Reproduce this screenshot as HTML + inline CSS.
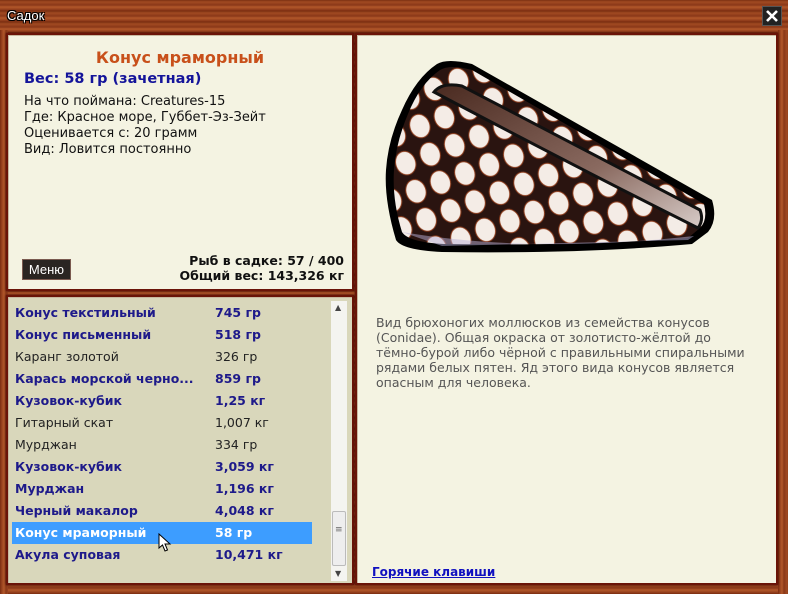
<!DOCTYPE html>
<html><head><meta charset="utf-8"><style>
*{margin:0;padding:0;box-sizing:border-box}
body{width:788px;height:594px;overflow:hidden;position:relative;font-family:"DejaVu Sans","Liberation Sans",sans-serif;
background:repeating-linear-gradient(0deg,#7a2c10 0px,#9a4420 2px,#b2582a 4px,#8a3818 6px,#a14a22 9px,#7c3012 11px);}
.vw{background:repeating-linear-gradient(90deg,#7a2c10 0px,#9a4420 2px,#b2582a 4px,#8a3818 6px,#a14a22 9px,#7c3012 11px);}
.p{position:absolute;background:#f4f3e2;border:2px solid #6a1408;box-shadow:inset 1px 1px 0 #c9b9a0, 0 0 2px #300;}
.t{position:absolute;white-space:nowrap}
.row{position:absolute;left:7px;height:22px;line-height:22px;font-size:12.5px;color:#1e1a8a;font-weight:bold;white-space:nowrap}
.row.n{font-weight:normal;color:#222}
.row span{position:absolute;left:200px}
</style></head><body>
<div class="vw" style="position:absolute;left:0;top:30px;width:8px;height:564px"></div>
<div class="vw" style="position:absolute;left:778px;top:30px;width:10px;height:564px"></div>
<div class="t" style="left:7px;top:8px;font-size:13px;color:#fff;font-family:'Liberation Sans',sans-serif;text-shadow:1px 1px 0 #000,-1px -1px 0 #000,1px -1px 0 #000,-1px 1px 0 #000">Садок</div>
<div style="position:absolute;left:762px;top:6px;width:20px;height:20px;background:#222;border:1px solid #555">
<svg width="18" height="18" viewBox="0 0 18 18"><path d="M4 4L14 14M14 4L4 14" stroke="#fff" stroke-width="2.6"/></svg></div>

<div class="p" style="left:6px;top:33px;width:348px;height:258px">
<div class="t" style="left:0;width:344px;text-align:center;top:13px;font-size:16px;font-weight:bold;color:#c8501a">Конус мраморный</div>
<div class="t" style="left:16px;top:36px;font-size:14.5px;font-weight:bold;color:#14149a">Вес: 58 гр (зачетная)</div>
<div class="t" style="left:16px;top:59px;font-size:13px;line-height:16px;color:#111">На что поймана: Creatures-15<br>Где: Красное море, Губбет-Эз-Зейт<br>Оценивается с: 20 грамм<br>Вид: Ловится постоянно</div>
<div class="t" style="left:14px;top:224px;width:49px;height:21px;background:#2a2522;border:1px solid #7a5a50;color:#fff;font-size:13px;line-height:19px;text-align:center;font-family:'Liberation Sans',sans-serif">Меню</div>
<div class="t" style="right:8px;top:218px;text-align:right;font-size:12.5px;line-height:15px;font-weight:bold;color:#111">Рыб в садке: 57 / 400<br>Общий вес: 143,326 кг</div>
</div>

<div class="p" style="left:6px;top:295px;width:348px;height:290px;background:#d9d7bb">
<div style="position:absolute;left:4px;top:225px;width:300px;height:22px;background:#3d9dff"></div>
<div class="row" style="top:5px">Конус текстильный<span>745 гр</span></div>
<div class="row" style="top:27px">Конус письменный<span>518 гр</span></div>
<div class="row n" style="top:49px">Каранг золотой<span>326 гр</span></div>
<div class="row" style="top:71px">Карась морской черно...<span>859 гр</span></div>
<div class="row" style="top:93px">Кузовок-кубик<span>1,25 кг</span></div>
<div class="row n" style="top:115px">Гитарный скат<span>1,007 кг</span></div>
<div class="row n" style="top:137px">Мурджан<span>334 гр</span></div>
<div class="row" style="top:159px">Кузовок-кубик<span>3,059 кг</span></div>
<div class="row" style="top:181px">Мурджан<span>1,196 кг</span></div>
<div class="row" style="top:203px">Черный макалор<span>4,048 кг</span></div>
<div class="row" style="top:225px;color:#fff">Конус мраморный<span>58 гр</span></div>
<div class="row" style="top:247px">Акула суповая<span>10,471 кг</span></div>
<svg style="position:absolute;left:150px;top:236px" width="14" height="20" viewBox="0 0 14 20"><path d="M1 1L1 15L4.5 12L7 18L9.5 17L7 11L12 11Z" fill="#fff" stroke="#000"/></svg>
<div style="position:absolute;left:323px;top:4px;width:16px;height:280px;background:#f4f4f0">
<div style="position:absolute;left:1px;top:210px;width:14px;height:55px;background:#eee;border:1px solid #bbb;border-radius:2px"></div>
<div class="t" style="left:4px;top:2px;font-size:8px;color:#444">▲</div>
<div class="t" style="left:4px;top:268px;font-size:8px;color:#444">▼</div>
<div class="t" style="left:4px;top:228px;font-size:9px;color:#666;line-height:3px">≡</div>
</div>
</div>

<div class="p" style="left:355px;top:33px;width:423px;height:552px">
<svg style="position:absolute;left:25px;top:25px" width="340" height="200" viewBox="0 0 340 200">
<defs><pattern id="sp" width="26" height="30" patternUnits="userSpaceOnUse" patternTransform="rotate(-20)">
<rect width="26" height="30" fill="#2a1410"/>
<ellipse cx="13" cy="15" rx="10" ry="12" fill="#f4ece6" stroke="#8a3a1a" stroke-width="1"/></pattern>
<linearGradient id="ap" x1="0" y1="0" x2="1" y2="1"><stop offset="0" stop-color="#4a2a20"/><stop offset=".6" stop-color="#8a6a60"/><stop offset="1" stop-color="#d8ccc8"/></linearGradient></defs>
<path d="M55 4Q65 -2 90 4L330 140Q336 160 326 172L310 184Q200 194 60 192Q20 190 14 180Q2 140 4 110Q6 80 20 50Q34 18 55 4Z" fill="#000"/>
<path d="M58 10Q68 4 90 10L322 144Q326 160 318 168L306 178Q200 186 62 184Q26 182 20 172Q10 140 12 110Q14 82 26 54Q38 24 58 10Z" fill="url(#sp)"/>
<path d="M52 32Q60 22 80 26L318 150Q322 160 316 168Q200 110 52 32Z" fill="url(#ap)" stroke="#111" stroke-width="3"/>
<path d="M20 172Q150 194 312 176L306 180L60 186Z" fill="#b8b0d8" opacity=".5"/>
</svg>
<div class="t" style="left:19px;top:280px;font-size:12.5px;line-height:15px;color:#555;white-space:normal;width:370px">Вид брюхоногих моллюсков из семейства конусов (Conidae). Общая окраска от золотисто-жёлтой до тёмно-бурой либо чёрной с правильными спиральными рядами белых пятен. Яд этого вида конусов является опасным для человека.</div>
<div class="t" style="left:15px;top:530px;font-size:12px;font-weight:bold;color:#1010c0;text-decoration:underline">Горячие клавиши</div>
</div>
</body></html>
